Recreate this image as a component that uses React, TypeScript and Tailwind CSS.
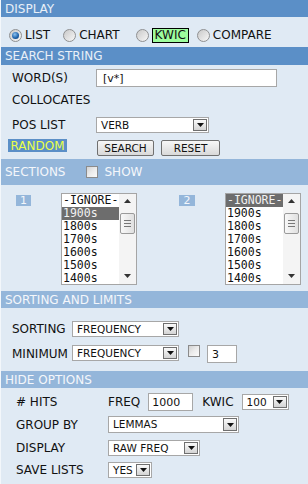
import React from 'react';

const years = ['-IGNORE-', '1900s', '1800s', '1700s', '1600s', '1500s', '1400s'];

function Header({ title, dark, className, children }: { title: string; dark?: boolean; className: string; children?: React.ReactNode }) {
  return (
    <div
      className={`flex items-center pl-[4px] text-[12px] ${dark ? 'bg-[#5b8fc7] text-[#e9f0f7]' : 'bg-[#94b6da] text-[#f4f7fb]'} ${className}`}
    >
      <span>{title}</span>
      {children}
    </div>
  );
}

function Arrow() {
  return (
    <svg width="7" height="4" viewBox="0 0 7 4">
      <polygon points="0,0 7,0 3.5,4" fill="#111" />
    </svg>
  );
}

function Select({ value, className }: { value: string; className: string }) {
  return (
    <div className={`flex items-stretch bg-white border border-[#a7a7a7] ${className}`}>
      <span className="flex-1 flex items-center pl-[4px] text-[10.5px] text-[#111] leading-none whitespace-nowrap">{value}</span>
      <div className="my-[1px] mr-[1px] w-[14px] flex items-end justify-center pb-[3px] border border-[#6f6f6f] bg-gradient-to-b from-[#fafafa] to-[#d4d4d4]">
        <Arrow />
      </div>
    </div>
  );
}

function Checkbox() {
  return <div className="w-[12px] h-[12px] border border-[#8b8b8b] bg-gradient-to-br from-[#d2d2d2] via-[#ececec] to-[#fbfbfb]" />;
}

function Radio({ checked }: { checked?: boolean }) {
  return (
    <div className="w-[13px] h-[13px] rounded-full border border-[#8f9091] bg-gradient-to-br from-[#c9c9c9] to-[#f7f7f7] flex items-center justify-center">
      {checked && <div className="w-[7px] h-[7px] rounded-full bg-[radial-gradient(circle_at_40%_35%,#8cc2f0,#1b5fa8_60%,#0d3766)]" />}
    </div>
  );
}

function ListBox({ selected }: { selected: number }) {
  return (
    <div className="flex w-[76px] h-[92px] border border-[#a5a5a5] bg-white">
      <div className="w-[57px] flex flex-col font-['DejaVu_Sans_Mono',monospace] text-[11.5px] leading-[13px] overflow-hidden">
        {years.map((y, i) => (
          <div key={y} className={`h-[13px] pl-[1px] whitespace-nowrap ${i === selected ? 'bg-[#6d6d6d] text-[#f2f2f2]' : 'text-[#111]'}`}>
            {y}
          </div>
        ))}
      </div>
      <div className="w-[17px] bg-[#f4f4f4] flex flex-col items-center">
        <svg className="mt-[5px]" width="7" height="4" viewBox="0 0 7 4">
          <polygon points="0,4 7,4 3.5,0" fill="#333" />
        </svg>
        <div className="mt-[10px] w-[15px] h-[21px] rounded-[2px] border border-[#9a9a9a] bg-gradient-to-r from-[#f8f8f8] to-[#e0e0e0] flex flex-col items-center justify-center gap-[2px]">
          <div className="w-[7px] h-px bg-[#777]" />
          <div className="w-[7px] h-px bg-[#777]" />
          <div className="w-[7px] h-px bg-[#777]" />
        </div>
        <svg className="mt-auto mb-[6px]" width="7" height="4" viewBox="0 0 7 4">
          <polygon points="0,0 7,0 3.5,4" fill="#333" />
        </svg>
      </div>
    </div>
  );
}

function Button({ label, className }: { label: string; className: string }) {
  return (
    <div className={`h-[16px] flex items-center justify-center rounded-[2px] border border-[#707070] bg-gradient-to-b from-[#f7f7f7] to-[#d9d9d9] text-[10.5px] text-[#111] ${className}`}>
      {label}
    </div>
  );
}

export default function App() {
  return (
    <div className="w-[308px] h-[484px] overflow-hidden bg-[#e0eaf4] border-l border-[#f3f7fb] font-['DejaVu_Sans',sans-serif] text-[12px] text-[#111] leading-none">
      <Header title="DISPLAY" dark className="h-[17px]" />
      <div className="h-[30px] flex items-center pt-[6px] pl-[8px]">
        <Radio checked />
        <span className="ml-[3px]">LIST</span>
        <div className="ml-[13px]"><Radio /></div>
        <span className="ml-[3px]">CHART</span>
        <div className="ml-[16px]"><Radio /></div>
        <span className="ml-[3px] h-[15px] px-[2px] flex items-center border border-black bg-[#9dfd9d]">KWIC</span>
        <div className="ml-[8px]"><Radio /></div>
        <span className="ml-[3px]">COMPARE</span>
      </div>

      <Header title="SEARCH STRING" dark className="h-[18px]" />
      <div className="h-[94px] pt-[4px] pl-[11px]">
        <div className="h-[18px] flex items-center">
          <span className="w-[84px]">WORD(S)</span>
          <div className="w-[181px] h-[18px] flex items-center pl-[6px] bg-white border border-[#a7a7a7] text-[11px]">[v*]</div>
        </div>
        <div className="mt-[3px] h-[20px] flex items-center">COLLOCATES</div>
        <div className="mt-[7px] h-[16px] flex items-center">
          <span className="w-[84px]">POS LIST</span>
          <Select value="VERB" className="w-[113px] h-[16px]" />
        </div>
        <div className="mt-[6px] flex items-start -ml-[4px]">
          <div className="w-[59px] h-[13px] flex items-center justify-center bg-[#5b8fc7] text-[#eaff48]">RANDOM</div>
          <Button label="SEARCH" className="ml-[30px] mt-[1px] w-[57px]" />
          <Button label="RESET" className="ml-[7px] mt-[1px] w-[59px]" />
        </div>
      </div>

      <Header title="SECTIONS" className="h-[26px]">
        <div className="ml-[20px]"><Checkbox /></div>
        <span className="ml-[7px]">SHOW</span>
      </Header>
      <div className="h-[106px] pt-[8px] pl-[15px] flex items-start">
        <div className="mt-[2px] w-[15px] h-[11px] flex items-center justify-center bg-[#94b6da] text-[#f4f7fb] text-[11px]">1</div>
        <div className="ml-[30px]"><ListBox selected={1} /></div>
        <div className="ml-[42px] mt-[2px] w-[16px] h-[11px] flex items-center justify-center bg-[#94b6da] text-[#f4f7fb] text-[11px]">2</div>
        <div className="ml-[30px]"><ListBox selected={0} /></div>
      </div>

      <Header title="SORTING AND LIMITS" className="h-[17px]" />
      <div className="h-[63px] pt-[13px] pl-[11px]">
        <div className="h-[16px] flex items-center">
          <span className="w-[60px]">SORTING</span>
          <Select value="FREQUENCY" className="w-[107px] h-[16px]" />
        </div>
        <div className="mt-[8px] h-[18px] flex items-start">
          <span className="w-[60px] mt-[3px]">MINIMUM</span>
          <Select value="FREQUENCY" className="w-[107px] h-[16px]" />
          <div className="ml-[9px]"><Checkbox /></div>
          <div className="ml-[7px] w-[30px] h-[18px] flex items-center pl-[4px] bg-white border border-[#a7a7a7] text-[11px]">3</div>
        </div>
      </div>

      <Header title="HIDE OPTIONS" className="h-[17px]" />
      <div className="pt-[5px] pl-[15px]">
        <div className="h-[18px] flex items-center">
          <span className="w-[92px]"># HITS</span>
          <span>FREQ</span>
          <div className="ml-[8px] w-[45px] h-[18px] flex items-center pl-[3px] bg-white border border-[#a7a7a7] text-[11px]">1000</div>
          <span className="ml-[9px]">KWIC</span>
          <div className="ml-[8px]">
            <Select value="100" className="w-[47px] h-[16px]" />
          </div>
        </div>
        <div className="mt-[5px] h-[17px] flex items-center">
          <span className="w-[92px]">GROUP BY</span>
          <Select value="LEMMAS" className="w-[131px] h-[17px]" />
        </div>
        <div className="mt-[7px] h-[16px] flex items-center">
          <span className="w-[92px]">DISPLAY</span>
          <Select value="RAW FREQ" className="w-[92px] h-[16px]" />
        </div>
        <div className="mt-[6px] h-[16px] flex items-center">
          <span className="w-[92px]">SAVE LISTS</span>
          <Select value="YES" className="w-[44px] h-[16px]" />
        </div>
      </div>
    </div>
  );
}
